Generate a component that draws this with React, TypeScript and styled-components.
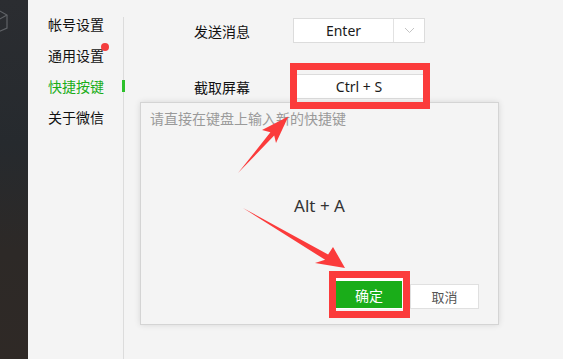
import * as React from 'react'
import styled, { createGlobalStyle } from 'styled-components'

const GlobalStyle = createGlobalStyle`
  html, body {
    margin: 0;
    padding: 0;
    background: #f4f4f4;
    overflow: hidden;
  }
  body {
    font-family: 'Noto Sans', 'Noto Sans CJK SC', sans-serif;
    color: #1a1a1a;
  }
  * {
    box-sizing: border-box;
  }
`

const menu = [
  { label: '帐号设置' },
  { label: '通用设置', dot: true },
  { label: '快捷按键', active: true },
  { label: '关于微信' },
]

const CubeIcon = () => (
  <svg width="12" height="40" viewBox="0 0 12 40">
    <g fill="none" stroke="#5f6266" strokeWidth="1.2">
      <polyline points="-4,9 7,15 7,28 -4,33" />
      <line x1="-4" y1="21" x2="7" y2="15" />
    </g>
  </svg>
)

const Chevron = () => (
  <svg width="11" height="7" viewBox="0 0 11 7">
    <polyline points="1,1 5.5,5.5 10,1" fill="none" stroke="#c4c4c4" strokeWidth="1" />
  </svg>
)

// red annotation arrows drawn over the page
const Arrows = () => (
  <ArrowLayer width="563" height="359" viewBox="0 0 563 359">
    <polygon
      fill="#fb3b3b"
      points="238,173 270.4,132.3 262,130 288.3,116.5 276,143 274.2,135.6"
    />
    <polygon
      fill="#fb3b3b"
      points="243,208 328.1,254.6 333,247 345,268 315,263 325.1,259.8"
    />
  </ArrowLayer>
)

export default function App() {
  return (
    <Page>
      <GlobalStyle />
      <DarkStrip>
        <CubeIcon />
      </DarkStrip>

      <Sidebar>
        <Nav>
          {menu.map((m) => (
            <NavItem key={m.label} active={!!m.active}>
              {m.label}
              {m.dot && <Dot />}
            </NavItem>
          ))}
        </Nav>
      </Sidebar>

      <Content>
        <Row>
          <Label>发送消息</Label>
          <Select>
            <SelectValue>Enter</SelectValue>
            <SelectArrow>
              <Chevron />
            </SelectArrow>
          </Select>
        </Row>
        <Row>
          <Label>截取屏幕</Label>
          <KeyInput>Ctrl + S</KeyInput>
        </Row>
      </Content>

      <Dialog>
        <Hint>请直接在键盘上输入新的快捷键</Hint>
        <Keys>Alt + A</Keys>
        <Buttons>
          <ConfirmWrap>
            <Button primary>确定</Button>
          </ConfirmWrap>
          <Button>取消</Button>
        </Buttons>
      </Dialog>

      <RedFrame style={{ left: 290, top: 63, width: 140, height: 46 }} />
      <RedFrame style={{ left: 329, top: 271, width: 81, height: 47 }} />
      <Arrows />
    </Page>
  )
}

// styles
const Page = styled.div`
  position: relative;
  display: flex;
  width: 563px;
  height: 359px;
`

const DarkStrip = styled.div`
  width: 28px;
  flex-shrink: 0;
  background: linear-gradient(180deg, #2b2d31 0%, #262a2e 40%, #2d2927 70%, #2f2926 100%);
  overflow: hidden;

  > svg {
    display: block;
  }
`

const Sidebar = styled.div`
  width: 96px;
  flex-shrink: 0;
  display: flex;
  flex-direction: column;
  padding-top: 17px;
`

const Nav = styled.ul`
  flex: 1;
  list-style: none;
  margin: 0;
  padding: 0;
  border-right: 1px solid #dcdcdc;

  > li:first-child {
    margin-top: -8px;
  }
`

const NavItem = styled.li<{ active: boolean }>`
  position: relative;
  height: 31px;
  line-height: 31px;
  padding-left: 20px;
  font-size: 14px;
  color: ${(p) => (p.active ? '#1aad19' : '#111')};

  &::after {
    content: '';
    display: ${(p) => (p.active ? 'block' : 'none')};
    position: absolute;
    right: -2px;
    top: 9px;
    width: 3px;
    height: 12px;
    background: #2dc12b;
  }
`

const Dot = styled.span`
  position: absolute;
  left: 73px;
  top: 3px;
  width: 8px;
  height: 8px;
  border-radius: 50%;
  background: #f43d3d;
`

const Content = styled.div`
  flex: 1;
  padding: 18px 0 0 70px;
  display: flex;
  flex-direction: column;
  gap: 31px;
`

const Row = styled.div`
  display: flex;
  align-items: center;
  height: 25px;
`

const Label = styled.div`
  width: 99px;
  font-size: 14px;
  color: #111;
`

const Select = styled.div`
  display: flex;
  width: 132px;
  height: 25px;
  background: #fff;
  border: 1px solid #dcdcdc;
`

const SelectValue = styled.div`
  flex: 1;
  display: flex;
  align-items: center;
  justify-content: center;
  font-size: 14px;
  color: #1a1a1a;
  border-right: 1px solid #e2e2e2;
`

const SelectArrow = styled.div`
  width: 30px;
  display: flex;
  align-items: center;
  justify-content: center;
`

const KeyInput = styled.div`
  width: 132px;
  height: 25px;
  display: flex;
  align-items: center;
  justify-content: center;
  background: #fff;
  border: 1px solid #dcdcdc;
  font-size: 14px;
  color: #1a1a1a;
`

const Dialog = styled.div`
  position: absolute;
  left: 140px;
  top: 102px;
  width: 359px;
  height: 223px;
  background: #f4f4f4;
  border: 1px solid #d4d4d4;
  box-shadow: 0 0 6px rgba(0, 0, 0, 0.12);
  display: flex;
  flex-direction: column;
  padding: 7px 19px 15px 9px;
`

const Hint = styled.div`
  font-size: 14px;
  color: #9a9a9a;
  line-height: 18px;
`

const Keys = styled.div`
  flex: 1;
  display: flex;
  align-items: center;
  justify-content: center;
  padding: 8px 0 0 10px;
  font-size: 17px;
  color: #333;
`

const Buttons = styled.div`
  display: flex;
  justify-content: flex-end;
  align-items: flex-end;
  gap: 7px;
`

const ConfirmWrap = styled.div`
  background: #fff;
  padding: 6px 1px 1px 0;
`

const Button = styled.div<{ primary?: boolean }>`
  width: ${(p) => (p.primary ? '66px' : '69px')};
  height: ${(p) => (p.primary ? '27px' : '25px')};
  display: flex;
  align-items: center;
  justify-content: center;
  font-size: ${(p) => (p.primary ? '14px' : '13px')};
  color: ${(p) => (p.primary ? '#fff' : '#555')};
  background: ${(p) => (p.primary ? '#1aad19' : '#fff')};
  border: 1px solid ${(p) => (p.primary ? '#1aad19' : '#e0e0e0')};
`

const RedFrame = styled.div`
  position: absolute;
  border: 7px solid #fb3b3b;
  pointer-events: none;
`

const ArrowLayer = styled.svg`
  position: absolute;
  left: 0;
  top: 0;
  pointer-events: none;
`
